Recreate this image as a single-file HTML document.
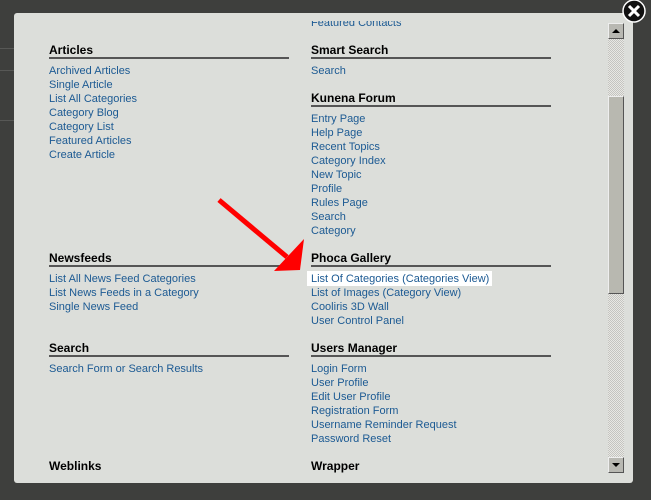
<!DOCTYPE html>
<html><head><meta charset="utf-8"><style>
*{margin:0;padding:0;box-sizing:border-box}
body{width:651px;height:500px;background:#3e3f3d;position:relative;overflow:hidden;font-family:"Liberation Sans",Arial,sans-serif;font-size:11px}
.bgl{position:absolute;left:0;width:14px;height:1px;background:#575856}
.modal{position:absolute;left:14px;top:13px;width:619px;height:470px;background:#dcdeda;border-radius:3px;overflow:hidden}
.h{position:absolute;font-weight:bold;font-size:12px;color:#000;width:240px;border-bottom:2px solid #555;height:15px;line-height:13px}
.l{position:absolute;color:#1c5a93;line-height:14px;white-space:nowrap}
.sb{position:absolute;left:594px;top:10px;width:16px;height:450px;background:repeating-conic-gradient(#c4c4c0 0 25%,#e8e8e4 0 50%) 0 0/2px 2px}
.btn{position:absolute;left:0;width:16px;height:16px;background:#b8b8b2;border:1px solid;border-color:#eee #555 #555 #eee}
.thumb{position:absolute;left:0;top:73px;width:16px;height:198px;background:#b8b8b0;border:1px solid;border-color:#eee #555 #555 #eee}
</style></head><body>
<div class="bgl" style="top:48px"></div><div class="bgl" style="top:70px"></div><div class="bgl" style="top:120px"></div>
<div class="modal">
<div class="l" style="left:297px;top:3px">Featured Contacts</div>
<div style="position:absolute;left:280px;top:0;width:200px;height:8px;background:#dcdeda"></div>
<div class="h" style="left:35px;top:31px">Articles</div>
<div class="l" style="left:35px;top:51px">Archived Articles<br>Single Article<br>List All Categories<br>Category Blog<br>Category List<br>Featured Articles<br>Create Article</div>
<div class="h" style="left:35px;top:239px">Newsfeeds</div>
<div class="l" style="left:35px;top:259px">List All News Feed Categories<br>List News Feeds in a Category<br>Single News Feed</div>
<div class="h" style="left:35px;top:329px">Search</div>
<div class="l" style="left:35px;top:349px">Search Form or Search Results</div>
<div class="h" style="left:35px;top:447px;border:none">Weblinks</div>

<div class="h" style="left:297px;top:31px">Smart Search</div>
<div class="l" style="left:297px;top:51px">Search</div>
<div class="h" style="left:297px;top:79px">Kunena Forum</div>
<div class="l" style="left:297px;top:99px">Entry Page<br>Help Page<br>Recent Topics<br>Category Index<br>New Topic<br>Profile<br>Rules Page<br>Search<br>Category</div>
<div class="h" style="left:297px;top:239px">Phoca Gallery</div>
<div style="position:absolute;left:293px;top:258px;width:185px;height:15px;background:#fff"></div>
<div class="l" style="left:297px;top:259px">List Of Categories (Categories View)<br>List of Images (Category View)<br>Cooliris 3D Wall<br>User Control Panel</div>
<div class="h" style="left:297px;top:329px">Users Manager</div>
<div class="l" style="left:297px;top:349px">Login Form<br>User Profile<br>Edit User Profile<br>Registration Form<br>Username Reminder Request<br>Password Reset</div>
<div class="h" style="left:297px;top:447px;border:none">Wrapper</div>

<div class="sb">
<div class="btn" style="top:0"><svg width="14" height="14" style="position:absolute;left:0;top:0"><path d="M3 9h8L7 5z" fill="#000"/></svg></div>
<div class="thumb"></div>
<div class="btn" style="top:434px"><svg width="14" height="14" style="position:absolute;left:0;top:0"><path d="M3 5h8L7 9z" fill="#000"/></svg></div>
</div>
</div>
<svg width="651" height="500" style="position:absolute;left:0;top:0">
<line x1="219" y1="200" x2="287" y2="257" stroke="#f00" stroke-width="5"/>
<path d="M304 239L274 271L300 270Z" fill="#f00"/>
<circle cx="634" cy="11" r="11" fill="#111" stroke="#fff" stroke-width="1.5"/>
<path d="M629 6L639 16M639 6L629 16" stroke="#fff" stroke-width="3"/>
</svg>
</body></html>
